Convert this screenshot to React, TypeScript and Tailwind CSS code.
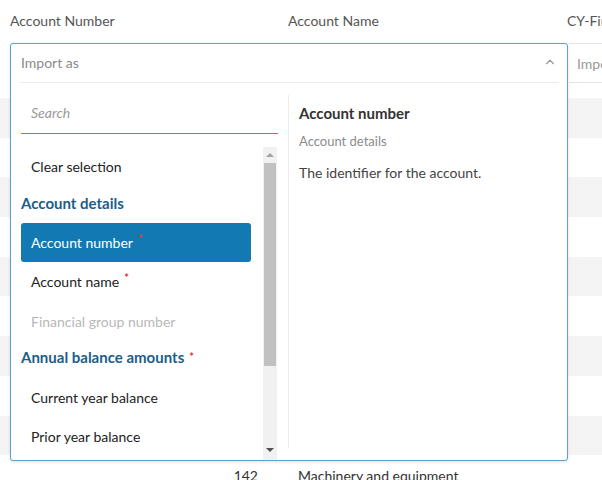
import React from 'react';
import { ChevronUp } from 'lucide-react';

const rows = [
  { num: '101', name: 'Cash' },
  { num: '105', name: 'Petty cash' },
  { num: '110', name: 'Accounts receivable' },
  { num: '115', name: 'Allowance for doubtful accounts' },
  { num: '120', name: 'Inventory' },
  { num: '125', name: 'Prepaid expenses' },
  { num: '130', name: 'Short-term investments' },
  { num: '140', name: 'Land' },
  { num: '141', name: 'Buildings' },
  { num: '142', name: 'Machinery and equipment' },
];

const Req = () => <span className="ml-[5px] self-start pt-[10px] text-[11px] font-bold leading-none text-[#e0353d]">*</span>;

const Option = ({ children, muted = false }: { children: React.ReactNode; muted?: boolean }) => (
  <div className={`flex h-[39.3px] shrink-0 items-center px-[10px] text-[14px] ${muted ? 'text-[#b8b8b8]' : 'text-[#222]'}`}>
    {children}
  </div>
);

const Group = ({ children }: { children: React.ReactNode }) => (
  <div className="flex h-[36.5px] shrink-0 items-center pb-[3px] text-[15px] font-bold text-[#1b5e88]">{children}</div>
);

export default function App() {
  return (
    <div className="relative h-[480px] w-[602px] overflow-hidden bg-white font-['Lato','Liberation_Sans',sans-serif] text-[#333]">
      {/* table behind */}
      <div className="flex h-[40px] items-center whitespace-nowrap text-[14px] text-[#555]">
        <div className="w-[288px] shrink-0 pl-[10px]">Account Number</div>
        <div className="w-[279px] shrink-0">Account Name</div>
        <div className="flex-1">CY-Final balance</div>
      </div>
      <div className="flex h-[58px]">
        <div className="w-[569px] shrink-0" />
        <div className="mt-[3px] flex h-[40px] flex-1 items-center overflow-hidden whitespace-nowrap border-t border-b border-[#e4e4e4] pl-[8px] text-[14px] text-[#999]">
          Import as
        </div>
      </div>
      <div className="flex flex-col">
        {rows.map((r, i) => (
          <div key={r.num} className={`flex h-[39.7px] shrink-0 items-center whitespace-nowrap text-[14px] text-[#333] ${i % 2 === 0 ? 'bg-[#f4f4f4]' : 'bg-white'}`}>
            <div className="w-[278px] shrink-0 pr-[20px] text-right">{r.num}</div>
            <div className="w-[289px] shrink-0 pl-[20px]">{r.name}</div>
            <div className="flex-1" />
          </div>
        ))}
      </div>

      {/* open dropdown */}
      <div className="absolute left-[10px] top-[43px] flex h-[418px] w-[558px] flex-col rounded-[3px] border border-[#55a6d6] bg-white shadow-[0_1px_3px_rgba(0,0,0,0.12)]">
        <div className="mx-[8px] flex h-[39px] shrink-0 items-center justify-between border-b border-[#ececec] pb-[2px] pl-[2px] pr-[2px] text-[14px] text-[#8a8a8a]">
          <span>Import as</span>
          <ChevronUp size={14} strokeWidth={2} className="text-[#9a9a9a]" />
        </div>
        <div className="flex min-h-0 flex-1">
          <div className="flex w-[277px] shrink-0 flex-col pl-[10px] pt-[14px]">
            <div className="mr-[10px] flex h-[37px] shrink-0 items-center border-b border-[#3a97cf] pb-[5px] pl-[10px] text-[14px] italic text-[#999]">
              Search
            </div>
            <div className="mr-[11px] flex min-h-0 flex-1 pt-[13px]">
              <div className="flex min-w-0 flex-1 flex-col overflow-hidden pr-[12px]">
                <Option>Clear selection</Option>
                <Group>Account details</Group>
                <div className="flex h-[39.5px] shrink-0 items-center rounded-[3px] bg-[#1279b2] px-[10px] text-[14px] text-white">
                  Account number<Req />
                </div>
                <Option>Account name<Req /></Option>
                <Option muted>Financial group number</Option>
                <Group>Annual balance amounts<Req /></Group>
                <Option>Current year balance</Option>
                <Option>Prior year balance</Option>
              </div>
              <div className="flex w-[14px] shrink-0 flex-col bg-[#f1f1f1] pb-[2px]">
                <div className="flex h-[16px] shrink-0 items-center justify-center">
                  <div className="h-0 w-0 border-x-[4px] border-b-[4px] border-x-transparent border-b-[#a3a3a3]" />
                </div>
                <div className="mx-[1px] h-[203px] shrink-0 bg-[#c1c1c1]" />
                <div className="flex-1" />
                <div className="flex h-[16px] shrink-0 items-center justify-center">
                  <div className="h-0 w-0 border-x-[4px] border-t-[4px] border-x-transparent border-t-[#505050]" />
                </div>
              </div>
            </div>
          </div>
          <div className="my-[12px] w-px bg-[#ececec]" />
          <div className="flex-1 pl-[10px] pt-[20px]">
            <div className="text-[15px] font-bold leading-[20px] text-[#333]">Account number</div>
            <div className="mt-[9px] text-[13px] leading-[18px] text-[#8c8c8c]">Account details</div>
            <div className="mt-[14px] text-[14px] leading-[18px] text-[#444]">The identifier for the account.</div>
          </div>
        </div>
      </div>
    </div>
  );
}
